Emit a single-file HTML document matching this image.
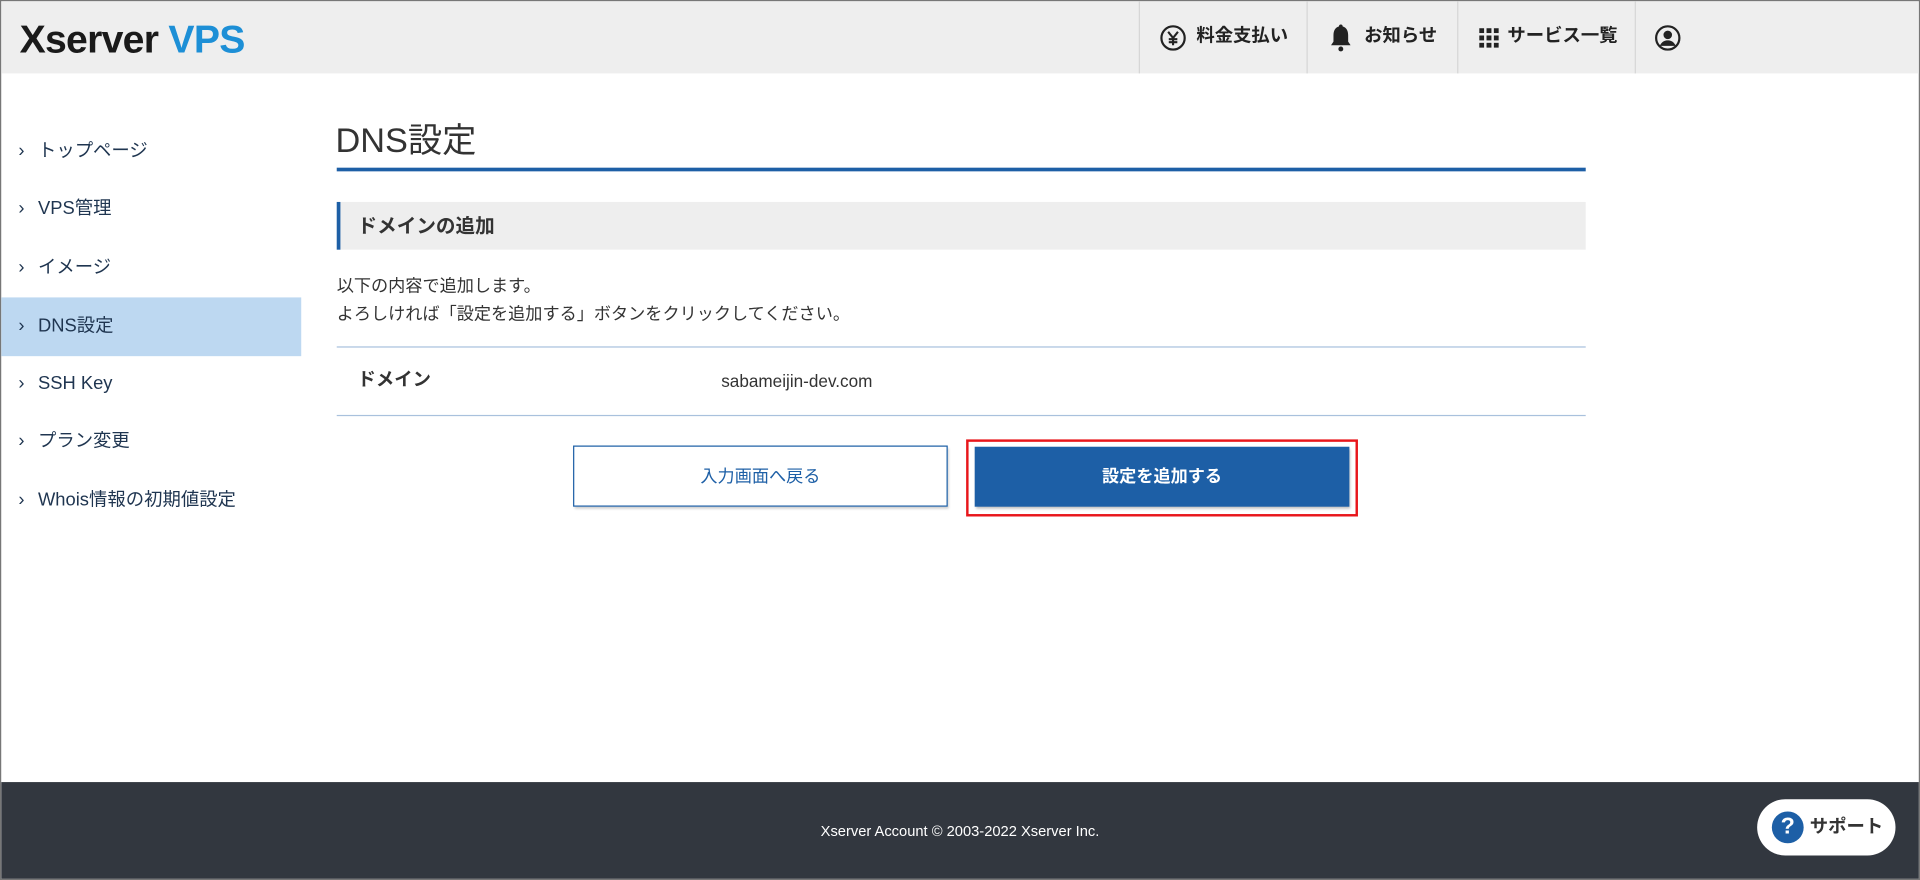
<!DOCTYPE html>
<html><head><meta charset="utf-8">
<style>
html,body{margin:0;padding:0;width:1920px;height:880px;overflow:hidden;background:#fff}
#w{position:absolute;left:0;top:0;width:1568px;height:719px;transform:scale(1.22449,1.22392);transform-origin:0 0;font-family:"Liberation Sans","Noto Sans CJK JP",sans-serif;color:#333;box-sizing:border-box;border:1px solid #777;overflow:hidden}
.a{position:absolute}
.hdr{left:0;top:0;width:1568px;height:59px;background:#eee}
.sep{top:0;width:1px;height:59px;background:#d6d6d6}
.nav{top:20px;font-size:15px;font-weight:bold;color:#222;line-height:18px}
.side{left:0;width:245px;height:48px;font-size:15px;color:#1f3550;line-height:48px}
.side span.c{position:absolute;left:14px;top:0}
.side span.t{position:absolute;left:30px}
</style></head><body>
<div id="w">
<div class="a hdr"></div>
<div class="a" style="left:15px;top:12px;font-size:32px;font-weight:bold;letter-spacing:-0.6px;line-height:38px"><span style="color:#1a1a1a">Xserver</span> <span style="color:#1d8fd6">VPS</span></div>
<div class="a sep" style="left:929px"></div>
<div class="a sep" style="left:1066px"></div>
<div class="a sep" style="left:1189px"></div>
<div class="a sep" style="left:1334px"></div>
<svg class="a" style="left:946px;top:19px" width="22" height="22" viewBox="0 0 22 22"><circle cx="11" cy="11" r="9.5" fill="none" stroke="#222" stroke-width="1.8"/><path d="M7 6l4 5 4-5M11 11v6M7.5 12h7M7.5 14.5h7" stroke="#222" stroke-width="1.7" fill="none"/></svg>
<div class="a nav" style="left:976px">料金支払い</div>
<svg class="a" style="left:1085px;top:18px" width="18" height="24" viewBox="0 0 18 24"><path d="M9 1c1 0 1.5.7 1.5 1.5C14 3.5 15 6.5 15 10v5l2 3H1l2-3v-5c0-3.5 1-6.5 4.5-7.5C7.5 1.7 8 1 9 1z" fill="#222"/><circle cx="9" cy="21" r="2" fill="#222"/></svg>
<div class="a nav" style="left:1113px">お知らせ</div>
<svg class="a" style="left:1207px;top:22px" width="16" height="16" viewBox="0 0 16 16" fill="#222"><rect x="0" y="0" width="4" height="4"/><rect x="6" y="0" width="4" height="4"/><rect x="12" y="0" width="4" height="4"/><rect x="0" y="6" width="4" height="4"/><rect x="6" y="6" width="4" height="4"/><rect x="12" y="6" width="4" height="4"/><rect x="0" y="12" width="4" height="4"/><rect x="6" y="12" width="4" height="4"/><rect x="12" y="12" width="4" height="4"/></svg>
<div class="a nav" style="left:1230px">サービス一覧</div>
<svg class="a" style="left:1350px;top:19px" width="22" height="22" viewBox="0 0 22 22"><circle cx="11" cy="11" r="9.5" fill="none" stroke="#222" stroke-width="1.8"/><circle cx="11" cy="8.5" r="3.5" fill="#222"/><path d="M4.5 17.5c1.5-3.5 4-4.5 6.5-4.5s5 1 6.5 4.5z" fill="#222"/></svg>

<div class="a side" style="top:99px"><span class="c">›</span><span class="t">トップページ</span></div>
<div class="a side" style="top:146px"><span class="c">›</span><span class="t">VPS管理</span></div>
<div class="a side" style="top:194px"><span class="c">›</span><span class="t">イメージ</span></div>
<div class="a side" style="top:242px;background:#bdd8f1"><span class="c">›</span><span class="t">DNS設定</span></div>
<div class="a side" style="top:289px"><span class="c">›</span><span class="t">SSH Key</span></div>
<div class="a side" style="top:336px"><span class="c">›</span><span class="t">プラン変更</span></div>
<div class="a side" style="top:384px"><span class="c">›</span><span class="t">Whois情報の初期値設定</span></div>

<div class="a" style="left:273px;top:96px;font-size:28px;line-height:36px;color:#333">DNS設定</div>
<div class="a" style="left:274px;top:136px;width:1020px;height:3px;background:#1d5fa6"></div>
<div class="a" style="left:274px;top:164px;width:1020px;height:39px;background:#eee;border-left:3px solid #1d5fa6;box-sizing:border-box"></div>
<div class="a" style="left:291px;top:175px;font-size:16px;font-weight:bold;line-height:20px">ドメインの追加</div>
<div class="a" style="left:274px;top:221px;font-size:14px;line-height:23px">以下の内容で追加します。<br>よろしければ「設定を追加する」ボタンをクリックしてください。</div>
<div class="a" style="left:274px;top:282px;width:1020px;height:1px;background:#a9c1dd"></div>
<div class="a" style="left:291px;top:301px;font-size:15px;font-weight:bold;line-height:18px">ドメイン</div>
<div class="a" style="left:588px;top:302px;font-size:14px;line-height:17px">sabameijin-dev.com</div>
<div class="a" style="left:274px;top:338px;width:1020px;height:1px;background:#a9c1dd"></div>

<div class="a" style="left:467px;top:363px;width:306px;height:50px;box-sizing:border-box;border:1px solid #1d5fa6;background:#fff;box-shadow:1px 2px 2px rgba(0,0,0,.2);color:#1d5fa6;font-size:14px;line-height:48px;text-align:center">入力画面へ戻る</div>
<div class="a" style="left:788px;top:358px;width:320px;height:63px;box-sizing:border-box;border:2px solid #e8161b"></div>
<div class="a" style="left:795px;top:364px;width:306px;height:49px;background:#1d5fa6;box-shadow:1px 2px 2px rgba(0,0,0,.25);color:#fff;font-size:14px;font-weight:bold;line-height:49px;text-align:center">設定を追加する</div>

<div class="a" style="left:0;top:638px;width:1568px;height:81px;background:#32373f"></div>
<div class="a" style="left:0;top:671px;width:1566px;text-align:center;color:#fff;font-size:12px;line-height:15px">Xserver Account © 2003-2022 Xserver Inc.</div>
<div class="a" style="left:1434px;top:652px;width:113px;height:46px;border-radius:23px;background:#fff"></div>
<div class="a" style="left:1446px;top:662px;width:26px;height:26px;border-radius:13px;background:#1d5fa6;color:#fff;font-weight:bold;font-size:19px;line-height:26px;text-align:center">?</div>
<div class="a" style="left:1477px;top:665px;font-size:15px;font-weight:bold;color:#333;line-height:19px">サポート</div>
</div>
</body></html>
